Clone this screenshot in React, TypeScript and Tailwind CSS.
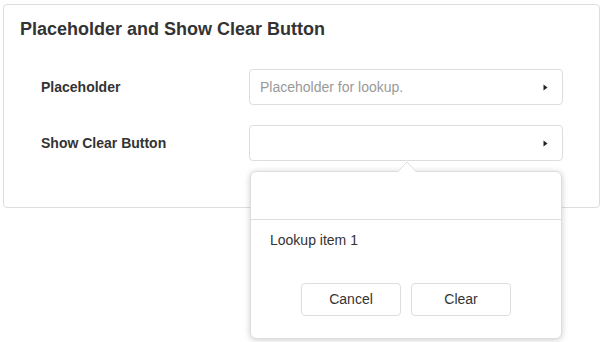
import React from 'react';

const Caret = () => (
  <svg width="5" height="7" viewBox="0 0 5 7" className="block">
    <polygon points="0.5,0.5 4.5,3.5 0.5,6.5" fill="#222" />
  </svg>
);

const LookupField: React.FC<{ placeholder?: string }> = ({ placeholder }) => (
  <div className="flex h-[36px] w-[314px] items-center justify-between rounded-[4px] border border-[#dddddd] bg-white pl-[10px] pr-[14px]">
    <span className="text-[14px] text-[#999999]">{placeholder}</span>
    <Caret />
  </div>
);

const FieldRow: React.FC<{ label: string; placeholder?: string }> = ({ label, placeholder }) => (
  <div className="flex items-center">
    <div className="w-[229px] pl-[21px] text-[14px] font-bold text-[#333333]">{label}</div>
    <LookupField placeholder={placeholder} />
  </div>
);

export default function App() {
  return (
    <div className="relative h-[342px] w-[602px] overflow-hidden bg-white font-['Liberation_Sans',Arial,sans-serif] text-[#333333]">
      <div className="ml-[3px] mt-[4px] w-[597px] rounded-[4px] border border-[#dddddd] pb-[46px] pl-[16px] pr-[36px] pt-[13px]">
        <h2 className="text-[18px] font-bold leading-[22px]">Placeholder and Show Clear Button</h2>
        <div className="mt-[29px] flex flex-col gap-[20px]">
          <FieldRow label="Placeholder" placeholder="Placeholder for lookup." />
          <FieldRow label="Show Clear Button" />
        </div>
      </div>

      {/* popup */}
      <div className="absolute left-[250px] top-[171px] h-[168px] w-[312px] rounded-[6px] border border-[#dddddd] bg-white shadow-[0_1px_6px_rgba(0,0,0,0.2)]">
        <svg width="20" height="12" viewBox="0 0 20 12" className="absolute left-[146px] top-[-11px]">
          <polygon points="0,11.5 10,1 20,11.5" fill="#fff" stroke="#dddddd" />
          <rect x="0" y="11" width="20" height="2" fill="#fff" />
        </svg>
        <div className="h-[48px] border-b border-[#dddddd]" />
        <div className="pl-[19px] pt-[12px] text-[14px] leading-[17px]">Lookup item 1</div>
        <div className="mt-[34px] flex justify-center gap-[10px]">
          <button className="h-[33px] w-[100px] rounded-[4px] border border-[#dddddd] bg-white text-[14px] text-[#333333]">Cancel</button>
          <button className="h-[33px] w-[100px] rounded-[4px] border border-[#dddddd] bg-white text-[14px] text-[#333333]">Clear</button>
        </div>
      </div>
    </div>
  );
}
